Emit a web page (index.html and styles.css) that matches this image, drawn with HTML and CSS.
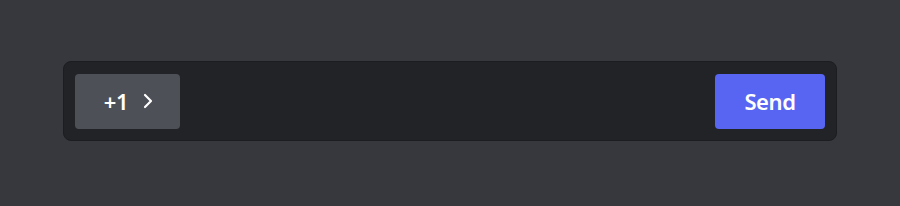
FILE: index.html
```html
<!DOCTYPE html>
<html lang="en">
<head>
  <meta charset="UTF-8">
  <title>Composer</title>
  <link rel="stylesheet" href="styles.css">
</head>
<body>
  <div class="composer">
    <button class="bump">
      <span>+1</span>
      <svg class="chevron" width="10" height="16" viewBox="0 0 10 16">
        <path d="M2 2 L8 8 L2 14" fill="none" stroke="#fff" stroke-width="2.2" stroke-linecap="round" stroke-linejoin="round"/>
      </svg>
    </button>
    <div class="field"></div>
    <button class="send">Send</button>
  </div>
</body>
</html>
```

FILE: styles.css
```css
body {
  margin: 0;
  height: 206px;
  background-color: #36383d;
  font-family: 'Noto Sans', sans-serif;
  display: flex;
  align-items: center;
  padding: 0 63px;
  box-sizing: border-box;
}

.composer {
  flex: 1;
  display: flex;
  align-items: center;
  gap: 12px;
  height: 80px;
  padding: 0 11px;
  box-sizing: border-box;
  background-color: #222327;
  border: 1px solid #1c1d20;
  border-radius: 8px;
  margin-top: -4px;
}

.composer button {
  height: 55px;
  border: none;
  border-radius: 4px;
  color: #fff;
  font-family: 'Noto Sans', sans-serif;
  font-size: 22px;
  font-weight: 600;
  letter-spacing: -0.4px;
  cursor: pointer;
}

.bump {
  width: 105px;
  background-color: #4e5058;
  display: flex;
  align-items: center;
  justify-content: center;
  gap: 15px;
  padding: 0 0 0 2px;
}

.chevron {
  display: block;
}

.field {
  flex: 1;
}

.send {
  width: 110px;
  background-color: #5865f2;
}
```
